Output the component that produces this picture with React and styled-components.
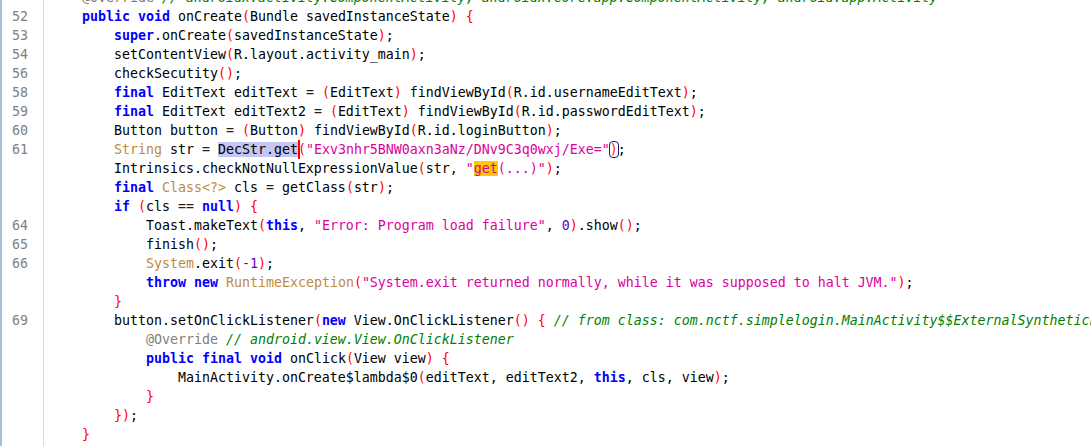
import React from "react";
import styled, { createGlobalStyle, css } from "styled-components";

const GlobalStyle = createGlobalStyle`
    html, body, #root {
        margin: 0;
        height: 100%;
        background: #ffffff;
    }
    body {
        overflow: hidden;
    }
`;

const Editor = styled.div`
    display: flex;
    height: 100vh;
    overflow: hidden;
    border-left: 2px solid #a9bfdc;
    font-family: "DejaVu Sans Mono", "Liberation Mono", monospace;
    font-size: 13.29px;
    line-height: 19px;
`;

const Gutter = styled.div`
    flex: 0 0 41px;
    border-right: 1px solid #dadada;
    padding-right: 15px;
    box-sizing: border-box;
    flex-basis: 42px;
    color: #808080;
    text-align: right;
`;

const Code = styled.div`
    flex: 1;
    min-width: 0;
    overflow: hidden;
    padding-left: 6px;
    color: #000000;
`;

const Lines = styled.div`
    margin-top: -12px;
`;

const LineNo = styled.div`
    height: 19px;
`;

const Line = styled.div`
    height: 19px;
    white-space: pre;
`;

const colors = {
    k: css`color: #0000ff; font-weight: bold;`,
    t: css`color: #c08a3e;`,
    s: css`color: #dc009c;`,
    n: css`color: #6400c8;`,
    p: css`color: #ff0000;`,
    a: css`color: #808080;`,
    c: css`color: #008000; font-style: italic;`,
    o: css`color: #222222;`,
};

const Tok = styled.span`
    ${(p) => colors[p.$kind]}
`;

const Selected = styled.span`
    background: #c6c6f4;
`;

const Marked = styled.span`
    background: #ffc800;
    color: #dc009c;
`;

const Caret = styled.span`
    position: relative;
    display: inline-block;
    width: 0;
    height: 19px;
    vertical-align: top;
    &::after {
        content: "";
        position: absolute;
        left: 0;
        top: 0;
        width: 2px;
        height: 19px;
        background: #ff0000;
    }
`;

const Match = styled.span`
    color: #ff2200;
    outline: 1px solid #1a1a80;
    border-radius: 3px;
`;

// [kind, text] — kind "" is plain identifier text
const code = [
    [null, [["", "    "], ["a", "@Override"], ["", " "], ["c", "// androidx.activity.ComponentActivity, androidx.core.app.ComponentActivity, android.app.Activity"]]],
    [52, [["", "    "], ["k", "public"], ["", " "], ["k", "void"], ["", " onCreate"], ["p", "("], ["", "Bundle savedInstanceState"], ["p", ")"], ["", " "], ["p", "{"]]],
    [53, [["", "        "], ["k", "super"], ["", ".onCreate"], ["p", "("], ["", "savedInstanceState"], ["p", ")"], ["", ";"]]],
    [54, [["", "        setContentView"], ["p", "("], ["", "R.layout.activity_main"], ["p", ")"], ["", ";"]]],
    [56, [["", "        checkSecutity"], ["p", "()"], ["", ";"]]],
    [58, [["", "        "], ["k", "final"], ["", " EditText editText "], ["o", "="], ["", " "], ["p", "("], ["", "EditText"], ["p", ")"], ["", " findViewById"], ["p", "("], ["", "R.id.usernameEditText"], ["p", ")"], ["", ";"]]],
    [59, [["", "        "], ["k", "final"], ["", " EditText editText2 "], ["o", "="], ["", " "], ["p", "("], ["", "EditText"], ["p", ")"], ["", " findViewById"], ["p", "("], ["", "R.id.passwordEditText"], ["p", ")"], ["", ";"]]],
    [60, [["", "        Button button "], ["o", "="], ["", " "], ["p", "("], ["", "Button"], ["p", ")"], ["", " findViewById"], ["p", "("], ["", "R.id.loginButton"], ["p", ")"], ["", ";"]]],
    [61, [["", "        "], ["t", "String"], ["", " str "], ["o", "="], ["", " "], ["sel", "DecStr.get"], ["caret", ""], ["p", "("], ["s", "\"Exv3nhr5BNW0axn3aNz/DNv9C3q0wxj/Exe=\""], ["match", ")"], ["", ";"]]],
    [null, [["", "        Intrinsics.checkNotNullExpressionValue"], ["p", "("], ["", "str, "], ["s", "\""], ["mark", "get"], ["s", "(...)\""], ["p", ")"], ["", ";"]]],
    [null, [["", "        "], ["k", "final"], ["", " "], ["t", "Class<?>"], ["", " cls "], ["o", "="], ["", " getClass"], ["p", "("], ["", "str"], ["p", ")"], ["", ";"]]],
    [null, [["", "        "], ["k", "if"], ["", " "], ["p", "("], ["", "cls "], ["o", "=="], ["", " "], ["k", "null"], ["p", ")"], ["", " "], ["p", "{"]]],
    [64, [["", "            Toast.makeText"], ["p", "("], ["k", "this"], ["", ", "], ["s", "\"Error: Program load failure\""], ["", ", "], ["n", "0"], ["p", ")"], ["", ".show"], ["p", "()"], ["", ";"]]],
    [65, [["", "            finish"], ["p", "()"], ["", ";"]]],
    [66, [["", "            "], ["t", "System"], ["", ".exit"], ["p", "("], ["n", "-1"], ["p", ")"], ["", ";"]]],
    [null, [["", "            "], ["k", "throw"], ["", " "], ["k", "new"], ["", " "], ["t", "RuntimeException"], ["p", "("], ["s", "\"System.exit returned normally, while it was supposed to halt JVM.\""], ["p", ")"], ["", ";"]]],
    [null, [["", "        "], ["p", "}"]]],
    [69, [["", "        button.setOnClickListener"], ["p", "("], ["k", "new"], ["", " View.OnClickListener"], ["p", "()"], ["", " "], ["p", "{"], ["", " "], ["c", "// from class: com.nctf.simplelogin.MainActivity$$ExternalSyntheticLambda0"]]],
    [null, [["", "            "], ["a", "@Override"], ["", " "], ["c", "// android.view.View.OnClickListener"]]],
    [null, [["", "            "], ["k", "public"], ["", " "], ["k", "final"], ["", " "], ["k", "void"], ["", " onClick"], ["p", "("], ["", "View view"], ["p", ")"], ["", " "], ["p", "{"]]],
    [null, [["", "                MainActivity.onCreate$lambda$0"], ["p", "("], ["", "editText, editText2, "], ["k", "this"], ["", ", cls, view"], ["p", ")"], ["", ";"]]],
    [null, [["", "            "], ["p", "}"]]],
    [null, [["", "        "], ["p", "})"], ["", ";"]]],
    [null, [["", "    "], ["p", "}"]]],
];

const renderToken = ([kind, text], i) => {
    if (kind === "sel") return <Selected key={i}>{text}</Selected>;
    if (kind === "caret") return <Caret key={i} />;
    if (kind === "mark") return <Marked key={i}>{text}</Marked>;
    if (kind === "match") return <Match key={i}>{text}</Match>;
    if (!kind) return <React.Fragment key={i}>{text}</React.Fragment>;
    return <Tok key={i} $kind={kind}>{text}</Tok>;
};

const App = () => {
    return (
        <>
            <GlobalStyle />
            <Editor>
                <Gutter>
                    <Lines>
                        {code.map(([num], i) => (
                            <LineNo key={i}>{num || "\u00a0"}</LineNo>
                        ))}
                    </Lines>
                </Gutter>
                <Code>
                    <Lines>
                        {code.map(([, tokens], i) => (
                            <Line key={i}>{tokens.map(renderToken)}</Line>
                        ))}
                    </Lines>
                </Code>
            </Editor>
        </>
    );
};

export default App;
